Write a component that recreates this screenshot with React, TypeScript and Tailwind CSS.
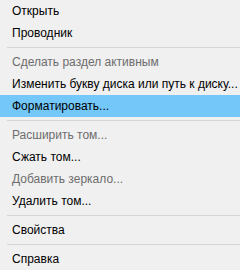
type Item = { label: string; disabled?: boolean; active?: boolean } | 'sep'

const items: Item[] = [
  { label: 'Открыть' },
  { label: 'Проводник' },
  'sep',
  { label: 'Сделать раздел активным', disabled: true },
  { label: 'Изменить букву диска или путь к диску...' },
  { label: 'Форматировать...', active: true },
  'sep',
  { label: 'Расширить том...', disabled: true },
  { label: 'Сжать том...' },
  { label: 'Добавить зеркало...', disabled: true },
  { label: 'Удалить том...' },
  'sep',
  { label: 'Свойства' },
  'sep',
  { label: 'Справка' },
]

export default function App() {
  return (
    <div className="flex h-[270px] w-[240px] flex-col overflow-hidden bg-[#f0f0f0] font-['Liberation_Sans',sans-serif] text-[12px]">
      {items.map((item, i) =>
        item === 'sep' ? (
          <div key={i} className="flex h-[7px] shrink-0 items-center pl-[7px]">
            <div className="h-px w-full bg-[#d5d5d5]" />
          </div>
        ) : (
          <div
            key={i}
            className={
              'flex h-[22px] shrink-0 items-center whitespace-nowrap pl-[12px] ' +
              (item.active ? 'bg-[#73c8f9] ' : '') +
              (item.disabled ? 'text-[#6d6d6d]' : 'text-black')
            }
          >
            {item.label}
          </div>
        )
      )}
    </div>
  )
}
